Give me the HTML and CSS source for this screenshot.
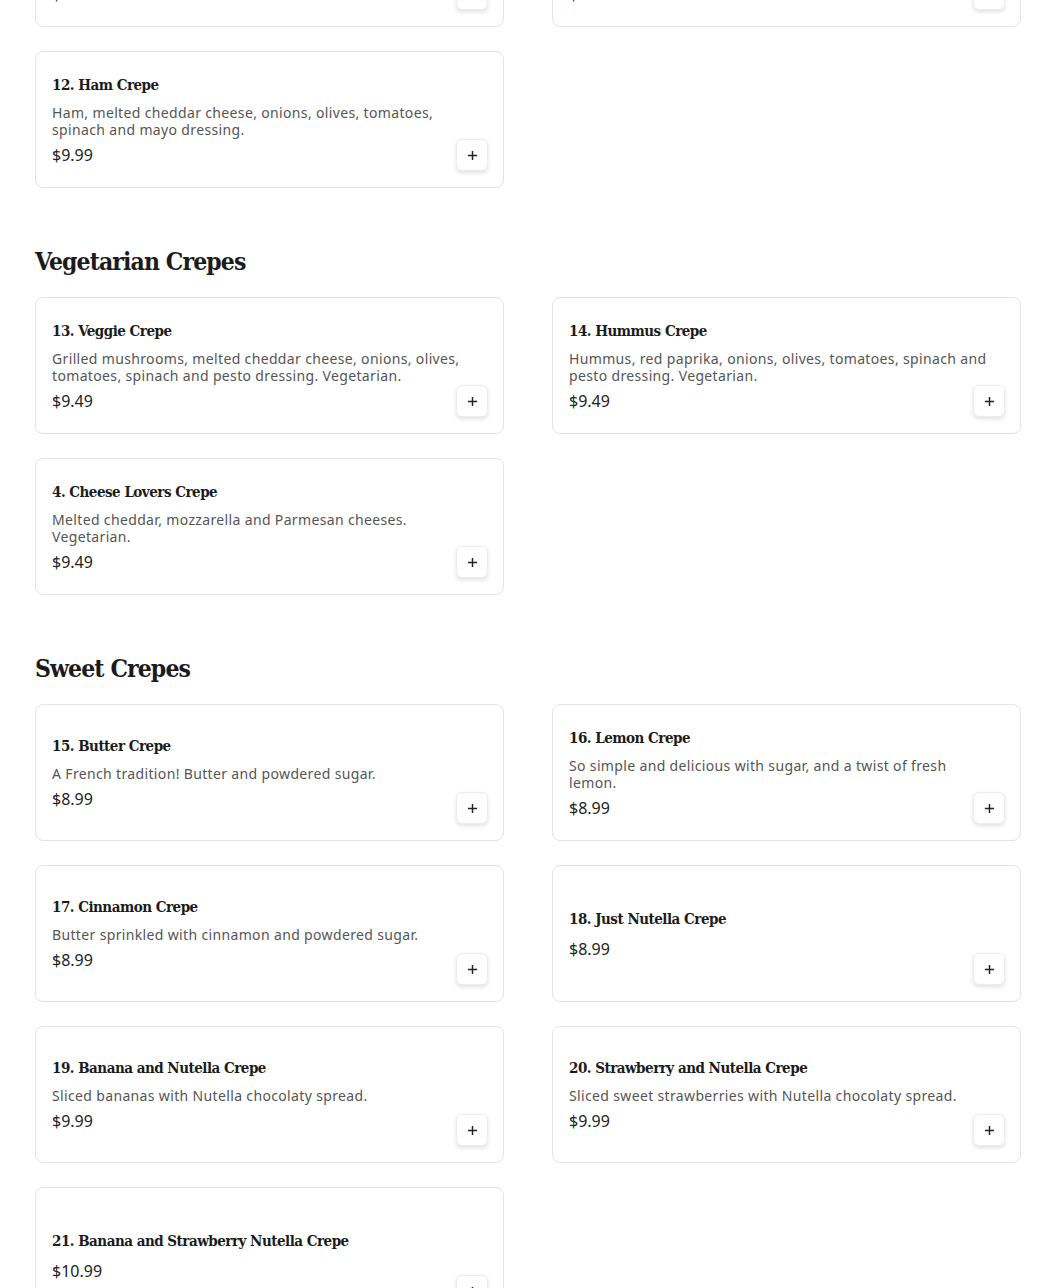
FILE: index.html
```html
<!DOCTYPE html>
<html lang="en">
<head>
  <meta charset="UTF-8">
  <meta name="viewport" content="width=device-width, initial-scale=1.0">
  <title>Crepes Menu</title>
  <link rel="stylesheet" href="styles.css">
</head>
<body>
  <div class="menu">
    <section class="section section-first">
      <div class="items">
        <div class="item">
          <div class="item-info">
            <h3 class="item-name">10. Turkey Crepe</h3>
            <p class="item-desc">Turkey, melted cheddar cheese, onions, olives, tomatoes, spinach and mayo dressing.</p>
            <div class="item-price">$9.99</div>
          </div>
          <button class="add-button" aria-label="Add"><svg viewBox="0 0 12 12"><path d="M6 1v10M1 6h10"/></svg></button>
        </div>
        <div class="item">
          <div class="item-info">
            <h3 class="item-name">11. Chicken Crepe</h3>
            <p class="item-desc">Chicken, melted cheddar cheese, onions, olives, tomatoes, spinach and pesto dressing.</p>
            <div class="item-price">$9.99</div>
          </div>
          <button class="add-button" aria-label="Add"><svg viewBox="0 0 12 12"><path d="M6 1v10M1 6h10"/></svg></button>
        </div>
        <div class="item">
          <div class="item-info">
            <h3 class="item-name">12. Ham Crepe</h3>
            <p class="item-desc">Ham, melted cheddar cheese, onions, olives, tomatoes, spinach and mayo dressing.</p>
            <div class="item-price">$9.99</div>
          </div>
          <button class="add-button" aria-label="Add"><svg viewBox="0 0 12 12"><path d="M6 1v10M1 6h10"/></svg></button>
        </div>
      </div>
    </section>

    <section class="section">
      <h2 class="section-title">Vegetarian Crepes</h2>
      <div class="items">
        <div class="item">
          <div class="item-info">
            <h3 class="item-name">13. Veggie Crepe</h3>
            <p class="item-desc">Grilled mushrooms, melted cheddar cheese, onions, olives, tomatoes, spinach and pesto dressing. Vegetarian.</p>
            <div class="item-price">$9.49</div>
          </div>
          <button class="add-button" aria-label="Add"><svg viewBox="0 0 12 12"><path d="M6 1v10M1 6h10"/></svg></button>
        </div>
        <div class="item">
          <div class="item-info">
            <h3 class="item-name">14. Hummus Crepe</h3>
            <p class="item-desc">Hummus, red paprika, onions, olives, tomatoes, spinach and pesto dressing. Vegetarian.</p>
            <div class="item-price">$9.49</div>
          </div>
          <button class="add-button" aria-label="Add"><svg viewBox="0 0 12 12"><path d="M6 1v10M1 6h10"/></svg></button>
        </div>
        <div class="item">
          <div class="item-info">
            <h3 class="item-name">4. Cheese Lovers Crepe</h3>
            <p class="item-desc">Melted cheddar, mozzarella and Parmesan cheeses. Vegetarian.</p>
            <div class="item-price">$9.49</div>
          </div>
          <button class="add-button" aria-label="Add"><svg viewBox="0 0 12 12"><path d="M6 1v10M1 6h10"/></svg></button>
        </div>
      </div>
    </section>

    <section class="section">
      <h2 class="section-title">Sweet Crepes</h2>
      <div class="items">
        <div class="item">
          <div class="item-info">
            <h3 class="item-name">15. Butter Crepe</h3>
            <p class="item-desc">A French tradition! Butter and powdered sugar.</p>
            <div class="item-price">$8.99</div>
          </div>
          <button class="add-button" aria-label="Add"><svg viewBox="0 0 12 12"><path d="M6 1v10M1 6h10"/></svg></button>
        </div>
        <div class="item">
          <div class="item-info">
            <h3 class="item-name">16. Lemon Crepe</h3>
            <p class="item-desc">So simple and delicious with sugar, and a twist of fresh lemon.</p>
            <div class="item-price">$8.99</div>
          </div>
          <button class="add-button" aria-label="Add"><svg viewBox="0 0 12 12"><path d="M6 1v10M1 6h10"/></svg></button>
        </div>
        <div class="item">
          <div class="item-info">
            <h3 class="item-name">17. Cinnamon Crepe</h3>
            <p class="item-desc">Butter sprinkled with cinnamon and powdered sugar.</p>
            <div class="item-price">$8.99</div>
          </div>
          <button class="add-button" aria-label="Add"><svg viewBox="0 0 12 12"><path d="M6 1v10M1 6h10"/></svg></button>
        </div>
        <div class="item">
          <div class="item-info">
            <h3 class="item-name">18. Just Nutella Crepe</h3>
            <p class="item-desc"></p>
            <div class="item-price">$8.99</div>
          </div>
          <button class="add-button" aria-label="Add"><svg viewBox="0 0 12 12"><path d="M6 1v10M1 6h10"/></svg></button>
        </div>
        <div class="item">
          <div class="item-info">
            <h3 class="item-name">19. Banana and Nutella Crepe</h3>
            <p class="item-desc">Sliced bananas with Nutella chocolaty spread.</p>
            <div class="item-price">$9.99</div>
          </div>
          <button class="add-button" aria-label="Add"><svg viewBox="0 0 12 12"><path d="M6 1v10M1 6h10"/></svg></button>
        </div>
        <div class="item">
          <div class="item-info">
            <h3 class="item-name">20. Strawberry and Nutella Crepe</h3>
            <p class="item-desc">Sliced sweet strawberries with Nutella chocolaty spread.</p>
            <div class="item-price">$9.99</div>
          </div>
          <button class="add-button" aria-label="Add"><svg viewBox="0 0 12 12"><path d="M6 1v10M1 6h10"/></svg></button>
        </div>
        <div class="item">
          <div class="item-info">
            <h3 class="item-name">21. Banana and Strawberry Nutella Crepe</h3>
            <p class="item-desc"></p>
            <div class="item-price">$10.99</div>
          </div>
          <button class="add-button" aria-label="Add"><svg viewBox="0 0 12 12"><path d="M6 1v10M1 6h10"/></svg></button>
        </div>
      </div>
    </section>
  </div>
</body>
</html>
```

FILE: styles.css
```css
body {
  margin: 0;
  background-color: #fff;
  font-family: "Noto Sans", Arial, sans-serif;
  color: #222;
}

.menu {
  padding: 0 30px 40px 35px;
  overflow: hidden;
}

.section {
  margin-top: 56px;
}

.section-first {
  margin-top: -110px;
}

.section-title {
  margin: 0 0 17px;
  font-family: "DejaVu Serif Condensed", "DejaVu Serif", Georgia, serif;
  font-stretch: condensed;
  font-weight: bold;
  font-size: 24.5px;
  line-height: 36px;
  letter-spacing: -0.9px;
  color: #1b1b1b;
}

.items {
  display: grid;
  grid-template-columns: 469px 469px;
  column-gap: 48px;
  row-gap: 24px;
}

/* info is centred in the card, the add button sits in the bottom right corner of the same cell */
.item {
  display: grid;
  grid-template-columns: 1fr;
  grid-template-rows: 1fr;
  box-sizing: border-box;
  height: 137px;
  padding: 15px 16px 16px 16px;
  border: 1px solid #e3e3e3;
  border-radius: 8px;
  background-color: #fff;
}

.item-info {
  grid-area: 1 / 1;
  align-self: center;
  min-width: 0;
  padding-right: 10px;
}

.item-name {
  margin: 1px 0 0;
  font-family: "DejaVu Serif Condensed", "DejaVu Serif", Georgia, serif;
  font-stretch: condensed;
  font-weight: bold;
  font-size: 15px;
  line-height: 22px;
  letter-spacing: -0.5px;
  color: #1b1b1b;
}

.item-desc {
  margin: 8px 0 6px;
  font-size: 14px;
  line-height: 17px;
  letter-spacing: 0.35px;
  color: #555;
}

.item-price {
  font-size: 16px;
  line-height: 22px;
  color: #222;
}

.add-button {
  grid-area: 1 / 1;
  justify-self: end;
  align-self: end;
  display: flex;
  justify-content: center;
  align-items: center;
  width: 32px;
  height: 32px;
  padding: 0;
  margin-right: -1px;
  border: 1px solid #ececec;
  border-radius: 6px;
  background-color: #fff;
  box-shadow: 0 2px 4px rgba(0, 0, 0, 0.12);
  cursor: pointer;
}

.add-button svg {
  width: 11px;
  height: 11px;
  fill: none;
  stroke: #222;
  stroke-width: 1.6;
}
```
